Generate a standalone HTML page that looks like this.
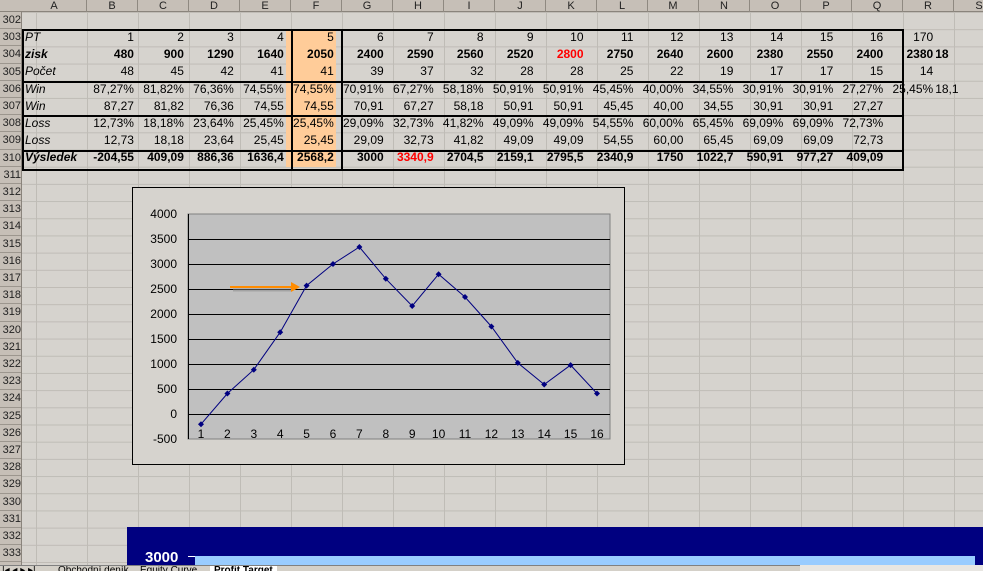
<!DOCTYPE html>
<html><head><meta charset="utf-8"><style>
*{margin:0;padding:0;box-sizing:border-box}
body{width:983px;height:571px;overflow:hidden;background:#d6d3ce;font-family:"Liberation Sans",Arial,sans-serif;position:relative}
.grid{position:absolute;left:22px;top:12px;width:961px;height:559px;
background-image:linear-gradient(to right,#bfbcb6 1px,transparent 1px),linear-gradient(to bottom,#bfbcb6 1px,transparent 1px);
background-size:51px 17.2px;background-position:65px 0,0 0}
.colh{position:absolute;top:0;left:0;width:983px;height:12px;background:#c6bfb7;border-bottom:1px solid #8a847c}
.colh span{position:absolute;top:0;height:12px;font-size:11px;line-height:12px;text-align:center;color:#222;border-right:1px solid #8f8981}
.rowh{position:absolute;left:0;top:12px;width:22px;height:559px;background:#c6bfb7;border-right:1px solid #8a847c}
.rowh span{position:absolute;left:0;width:21px;font-size:11px;line-height:17.2px;height:17.2px;color:#222;border-bottom:1px solid #9c968e;text-align:right;overflow:hidden}
table{position:absolute;left:22px;top:29px;border-collapse:collapse;table-layout:fixed}
td{height:17.2px;font-size:12px;text-align:right;padding:0 2px 0 0;white-space:nowrap;overflow:visible;line-height:17px}
td.a{text-align:left;font-style:italic;padding-left:3px}
tr.b td{font-weight:bold}
.f{background:#ffcc99}
.red{color:#f00}
</style></head><body>
<div class="grid"></div>
<div class="colh">
<span style="left:22px;width:65px">A</span><span style="left:87px;width:51px">B</span><span style="left:138px;width:51px">C</span><span style="left:189px;width:51px">D</span><span style="left:240px;width:51px">E</span><span style="left:291px;width:51px">F</span><span style="left:342px;width:51px">G</span><span style="left:393px;width:51px">H</span><span style="left:444px;width:51px">I</span><span style="left:495px;width:51px">J</span><span style="left:546px;width:51px">K</span><span style="left:597px;width:51px">L</span><span style="left:648px;width:51px">M</span><span style="left:699px;width:51px">N</span><span style="left:750px;width:51px">O</span><span style="left:801px;width:51px">P</span><span style="left:852px;width:51px">Q</span><span style="left:903px;width:51px">R</span><span style="left:954px;width:51px">S</span>
</div>
<div class="rowh">
<span style="top:0">302</span><span style="top:17.2px">303</span><span style="top:34.4px">304</span><span style="top:51.6px">305</span><span style="top:68.8px">306</span><span style="top:86px">307</span><span style="top:103.2px">308</span><span style="top:120.4px">309</span><span style="top:137.6px">310</span><span style="top:154.8px">311</span><span style="top:172px">312</span><span style="top:189.2px">313</span><span style="top:206.4px">314</span><span style="top:223.6px">315</span><span style="top:240.8px">316</span><span style="top:258px">317</span><span style="top:275.2px">318</span><span style="top:292.4px">319</span><span style="top:309.6px">320</span><span style="top:326.8px">321</span><span style="top:344px">322</span><span style="top:361.2px">323</span><span style="top:378.4px">324</span><span style="top:395.6px">325</span><span style="top:412.8px">326</span><span style="top:430px">327</span><span style="top:447.2px">328</span><span style="top:464.4px">329</span><span style="top:481.6px">330</span><span style="top:498.8px">331</span><span style="top:516px">332</span><span style="top:533.2px">333</span>
</div>
<table>
<colgroup><col style="width:65px"><col style="width:51px"><col style="width:51px"><col style="width:51px"><col style="width:51px"><col style="width:51px"><col style="width:51px"><col style="width:51px"><col style="width:51px"><col style="width:51px"><col style="width:51px"><col style="width:51px"><col style="width:51px"><col style="width:51px"><col style="width:51px"><col style="width:51px"><col style="width:51px"><col style="width:51px"><col style="width:51px"></colgroup>
<tr><td class="a">PT</td><td>1</td><td>2</td><td>3</td><td>4</td><td class="f">5</td><td>6</td><td>7</td><td>8</td><td>9</td><td>10</td><td>11</td><td>12</td><td>13</td><td>14</td><td>15</td><td>16</td><td>170</td><td></td></tr>
<tr class="b"><td class="a">zisk</td><td>480</td><td>900</td><td>1290</td><td>1640</td><td class="f">2050</td><td>2400</td><td>2590</td><td>2560</td><td>2520</td><td class="red">2800</td><td>2750</td><td>2640</td><td>2600</td><td>2380</td><td>2550</td><td>2400</td><td>2380</td><td style="text-align:left">18</td></tr>
<tr><td class="a">Počet</td><td>48</td><td>45</td><td>42</td><td>41</td><td class="f">41</td><td>39</td><td>37</td><td>32</td><td>28</td><td>28</td><td>25</td><td>22</td><td>19</td><td>17</td><td>17</td><td>15</td><td>14</td><td></td></tr>
<tr><td class="a">Win</td><td>87,27%</td><td>81,82%</td><td>76,36%</td><td>74,55%</td><td class="f">74,55%</td><td>70,91%</td><td>67,27%</td><td>58,18%</td><td>50,91%</td><td>50,91%</td><td>45,45%</td><td>40,00%</td><td>34,55%</td><td>30,91%</td><td>30,91%</td><td>27,27%</td><td>25,45%</td><td style="text-align:left">18,1</td></tr>
<tr><td class="a">Win</td><td>87,27</td><td>81,82</td><td>76,36</td><td>74,55</td><td class="f">74,55</td><td>70,91</td><td>67,27</td><td>58,18</td><td>50,91</td><td>50,91</td><td>45,45</td><td>40,00</td><td>34,55</td><td>30,91</td><td>30,91</td><td>27,27</td><td></td><td></td></tr>
<tr><td class="a">Loss</td><td>12,73%</td><td>18,18%</td><td>23,64%</td><td>25,45%</td><td class="f">25,45%</td><td>29,09%</td><td>32,73%</td><td>41,82%</td><td>49,09%</td><td>49,09%</td><td>54,55%</td><td>60,00%</td><td>65,45%</td><td>69,09%</td><td>69,09%</td><td>72,73%</td><td></td><td></td></tr>
<tr><td class="a">Loss</td><td>12,73</td><td>18,18</td><td>23,64</td><td>25,45</td><td class="f">25,45</td><td>29,09</td><td>32,73</td><td>41,82</td><td>49,09</td><td>49,09</td><td>54,55</td><td>60,00</td><td>65,45</td><td>69,09</td><td>69,09</td><td>72,73</td><td></td><td></td></tr>
<tr class="b"><td class="a">Výsledek</td><td>-204,55</td><td>409,09</td><td>886,36</td><td>1636,4</td><td class="f">2568,2</td><td>3000</td><td class="red">3340,9</td><td>2704,5</td><td>2159,1</td><td>2795,5</td><td>2340,9</td><td>1750</td><td>1022,7</td><td>590,91</td><td>977,27</td><td>409,09</td><td></td><td></td></tr>
</table>
<!-- thick borders -->
<div style="position:absolute;left:22px;top:29px;width:882px;height:142px;border:2px solid #000"></div>
<div style="position:absolute;left:22px;top:80.5px;width:882px;height:2px;background:#000"></div>
<div style="position:absolute;left:22px;top:115px;width:882px;height:2px;background:#000"></div>
<div style="position:absolute;left:22px;top:149.5px;width:882px;height:2px;background:#000"></div>
<div style="position:absolute;left:291px;top:29px;width:52px;height:142px;border-left:2px solid #000;border-right:2px solid #000"></div>
<!-- chart -->
<svg style="position:absolute;left:0;top:0" width="983" height="571">
<rect x="132.5" y="187.5" width="492" height="277" fill="#d6d3ce" stroke="#000"/>
<rect x="188" y="214" width="422" height="225" fill="#c0c0c0" stroke="#808080"/>
<g stroke="#000" stroke-width="1">
<line x1="188" x2="610" y1="239.5" y2="239.5"/><line x1="188" x2="610" y1="264.5" y2="264.5"/><line x1="188" x2="610" y1="289.5" y2="289.5"/><line x1="188" x2="610" y1="314.5" y2="314.5"/><line x1="188" x2="610" y1="339.5" y2="339.5"/><line x1="188" x2="610" y1="364.5" y2="364.5"/><line x1="188" x2="610" y1="389.5" y2="389.5"/><line x1="188" x2="610" y1="414.5" y2="414.5"/>
<line x1="188.5" x2="188.5" y1="214" y2="439"/><line x1="188" x2="610" y1="414.5" y2="414.5"/>
</g>
<g font-size="12" text-anchor="end" fill="#000" font-family="Liberation Sans,Arial,sans-serif">
<text x="177" y="218">4000</text><text x="177" y="243">3500</text><text x="177" y="268">3000</text><text x="177" y="293">2500</text><text x="177" y="318">2000</text><text x="177" y="343">1500</text><text x="177" y="368">1000</text><text x="177" y="393">500</text><text x="177" y="418">0</text><text x="177" y="443">-500</text>
</g>
<g font-size="12" text-anchor="middle" fill="#000" font-family="Liberation Sans,Arial,sans-serif">
<text x="201" y="438">1</text><text x="227.4" y="438">2</text><text x="253.8" y="438">3</text><text x="280.2" y="438">4</text><text x="306.6" y="438">5</text><text x="333" y="438">6</text><text x="359.4" y="438">7</text><text x="385.8" y="438">8</text><text x="412.2" y="438">9</text><text x="438.6" y="438">10</text><text x="465" y="438">11</text><text x="491.4" y="438">12</text><text x="517.8" y="438">13</text><text x="544.2" y="438">14</text><text x="570.6" y="438">15</text><text x="597" y="438">16</text>
</g>
<polyline fill="none" stroke="#000080" stroke-width="1" points="201,424.2 227.4,393.5 253.8,369.7 280.2,332.2 306.6,285.6 333,264 359.4,247 385.8,278.8 412.2,306 438.6,274.2 465,297 491.4,326.5 517.8,362.9 544.2,384.5 570.6,365.1 597,393.5"/>
<g fill="#000080">
<path d="M201 421.2l3 3-3 3-3-3z"/><path d="M227.4 390.5l3 3-3 3-3-3z"/><path d="M253.8 366.7l3 3-3 3-3-3z"/><path d="M280.2 329.2l3 3-3 3-3-3z"/><path d="M306.6 282.6l3 3-3 3-3-3z"/><path d="M333 261l3 3-3 3-3-3z"/><path d="M359.4 244l3 3-3 3-3-3z"/><path d="M385.8 275.8l3 3-3 3-3-3z"/><path d="M412.2 303l3 3-3 3-3-3z"/><path d="M438.6 271.2l3 3-3 3-3-3z"/><path d="M465 294l3 3-3 3-3-3z"/><path d="M491.4 323.5l3 3-3 3-3-3z"/><path d="M517.8 359.9l3 3-3 3-3-3z"/><path d="M544.2 381.5l3 3-3 3-3-3z"/><path d="M570.6 362.1l3 3-3 3-3-3z"/><path d="M597 390.5l3 3-3 3-3-3z"/>
</g>
<line x1="233" y1="290" x2="292" y2="290" stroke="#888" stroke-width="3" opacity="0.5"/>
<line x1="230" y1="287" x2="292" y2="287" stroke="#ff8c00" stroke-width="2"/>
<path d="M291 282l9 5-9 5z" fill="#ff8c00"/>
<!-- bottom blue chart -->
<rect x="127" y="527" width="856" height="44" fill="#000080"/>
<rect x="195" y="556" width="780" height="15" fill="#99ccff"/>
<line x1="188" y1="556.5" x2="195" y2="556.5" stroke="#fff"/>
<text x="145" y="562" font-size="15" font-weight="bold" fill="#fff" font-family="Liberation Sans,Arial,sans-serif">3000</text>
</svg>
<!-- tab bar -->
<div style="position:absolute;left:0;top:565px;width:610px;height:6px;background:#d4d0c8;border-top:1px solid #808080;overflow:hidden;font-size:10px;line-height:10px;white-space:nowrap">
<span style="position:absolute;left:2px;top:0">|◂ ◂ ▸ ▸|</span>
<span style="position:absolute;left:58px;top:0">Obchodní deník</span>
<span style="position:absolute;left:140px;top:0">Equity Curve</span>
<span style="position:absolute;left:210px;top:0;font-weight:bold;background:#fff;padding:0 4px">Profit Target</span>
</div>
<div style="position:absolute;left:610px;top:565px;width:200px;height:6px;background:#d4d0c8;border-top:1px solid #808080"></div>
<div style="position:absolute;left:800px;top:565px;width:183px;height:6px;background:#e8e6e2"></div>
</body></html>
